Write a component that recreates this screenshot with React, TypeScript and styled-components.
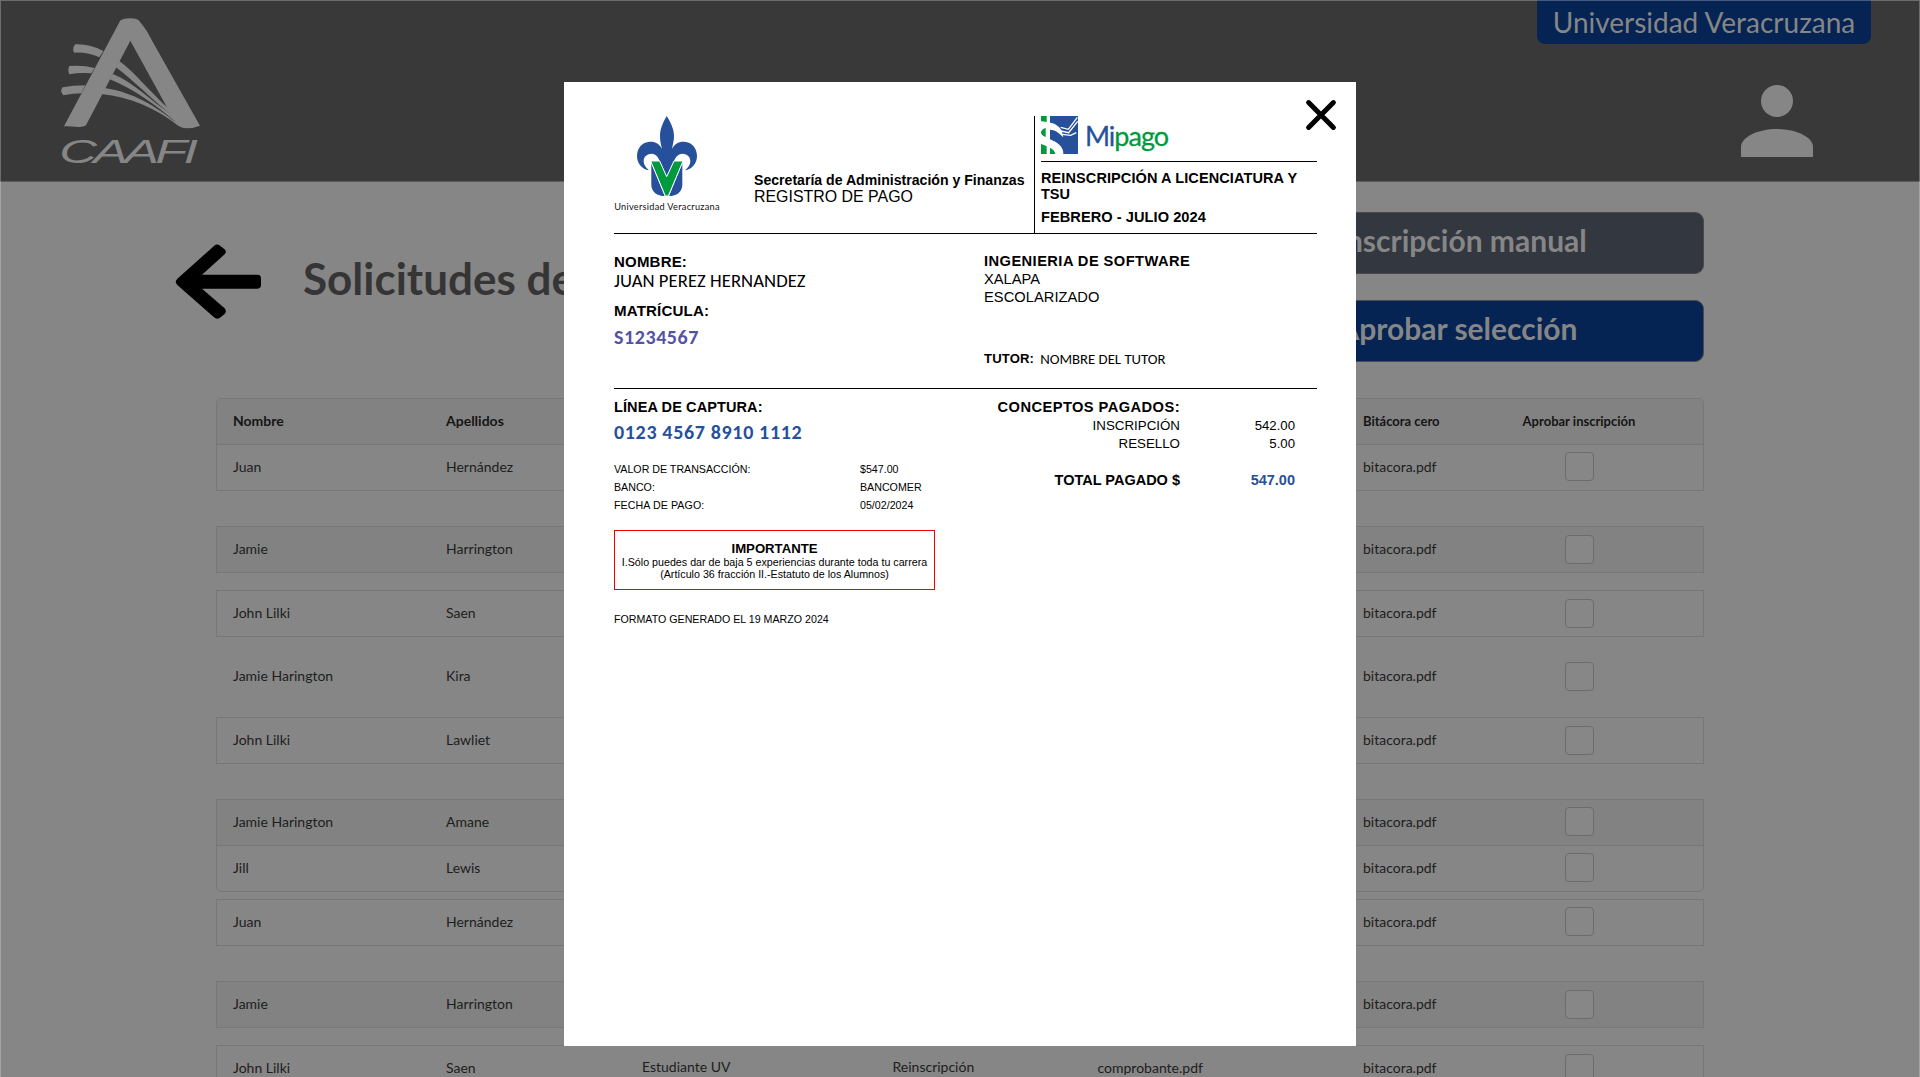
import React from 'react';
import styled, { createGlobalStyle } from 'styled-components';

const GlobalStyle = createGlobalStyle`
  *, *::before, *::after { box-sizing: border-box; }
  html, body { margin: 0; padding: 0; }
  body { font-family: "Lato", sans-serif; background: #868686; overflow: hidden; }
`;

const Screen = styled.div`
  position: relative;
  width: 1920px;
  height: 1077px;
  overflow: hidden;
  background: #868686;
  color: #1d1d1d;
`;

/* ---------- Page header ---------- */

const Header = styled.header`
  display: flex;
  justify-content: space-between;
  height: 182px;
  padding: 0 49px 0 60px;
  background: #393939;
  border-bottom: 1px solid #5c5c5c;
`;

const HeaderLogo = styled.div`
  padding-top: 17px;
`;

const HeaderSide = styled.div`
  display: flex;
  flex-direction: column;
  align-items: flex-end;
`;

const UniversityTag = styled.div`
  width: 334px;
  height: 44px;
  border-radius: 0 0 8px 8px;
  background: #052453;
  color: #868686;
  font-size: 28px;
  line-height: 44px;
  text-align: center;
`;

const UserButton = styled.button`
  display: block;
  margin: 41px 58px 0 0;
  padding: 0;
  border: 0;
  background: none;
  line-height: 0;
`;

/* ---------- Toolbar ---------- */

const Toolbar = styled.section`
  display: flex;
  height: 216px;
  padding: 30px 216px 0 175px;
`;

const BackButton = styled.button`
  width: 87px;
  height: 76px;
  margin-top: 32px;
  padding: 0;
  border: 0;
  background: none;
  line-height: 0;
`;

const Title = styled.h1`
  margin: 39px 0 0 41px;
  color: #353535;
  font-size: 44px;
  font-weight: 700;
  line-height: 54px;
  white-space: nowrap;
`;

const Actions = styled.div`
  display: flex;
  flex-direction: column;
  gap: 26px;
  width: 492px;
  margin-left: auto;
`;

const ActionButton = styled.button<{ $color: string; $shift?: number }>`
  height: 62px;
  padding: 0 0 6px ${(p) => p.$shift ?? 0}px;
  border: 1px solid #4a4a4a;
  border-radius: 9px;
  background: ${(p) => p.$color};
  color: #868686;
  font: 700 30px "Lato", sans-serif;
`;

/* ---------- Table ---------- */

const Table = styled.section`
  width: 1488px;
  margin: 0 auto;
`;

const RowGroup = styled.div<{ $gap: number; $bare?: boolean; $round?: 'top' | 'bottom' }>`
  margin-top: ${(p) => p.$gap}px;
  border: 1px solid ${(p) => (p.$bare ? 'transparent' : '#777777')};
  border-radius: ${(p) => (p.$round === 'top' ? '5px 5px 0 0' : p.$round === 'bottom' ? '0 0 5px 5px' : '0')};
  overflow: hidden;
`;

const Row = styled.div<{ $shaded?: boolean; $head?: boolean }>`
  display: grid;
  grid-template-columns: 213px 196px 250.5px 205px 265.5px 91px 250px;
  align-items: center;
  height: 45px;
  padding-left: 16px;
  background: ${(p) => (p.$shaded ? '#828282' : 'transparent')};
  color: ${(p) => (p.$head ? '#151515' : '#1d1d1d')};
  font-size: 14px;
  font-weight: ${(p) => (p.$head ? 700 : 400)};

  & + & {
    border-top: 1px solid #777777;
    height: 46px;
  }
`;

const Cell = styled.span<{ $lift?: number; $small?: boolean }>`
  padding-bottom: ${(p) => p.$lift ?? 2}px;
  font-size: ${(p) => (p.$small ? 13 : 14)}px;
  white-space: nowrap;
`;

const CheckCell = styled.span<{ $low?: boolean }>`
  display: flex;
  justify-content: center;
  font-size: 13px;
  padding-bottom: ${(p) => (p.$low ? 0 : 2)}px;
`;

const Checkbox = styled.span`
  width: 29px;
  height: 29px;
  border: 1px solid #6c6c6c;
  border-radius: 4px;
  background: #878787;
`;

/* ---------- Modal ---------- */

const Overlay = styled.div`
  position: absolute;
  inset: 0;
  border: 1px solid rgba(255, 255, 255, 0.26);
  border-bottom: 0;
  display: flex;
  justify-content: center;
  align-items: flex-start;
  padding-top: 81px;
`;

const Modal = styled.div`
  position: relative;
  width: 792px;
  height: 964px;
  padding: 34px 39px 0 50px;
  background: #ffffff;
  color: #000000;
  font-family: "Liberation Sans", Arial, sans-serif;
`;

const CloseButton = styled.button`
  position: absolute;
  top: 17px;
  right: 19px;
  padding: 0;
  border: 0;
  background: none;
  line-height: 0;
`;

const DocHeader = styled.div`
  display: flex;
  height: 118px;
  border-bottom: 1px solid #000000;
`;

const Crest = styled.div`
  display: flex;
  flex-direction: column;
  align-items: center;
  width: 106px;
`;

const CrestName = styled.div`
  margin-top: 2px;
  color: #111111;
  font: 400 9.2px/14px "Lato", sans-serif;
  letter-spacing: 0.28px;
  white-space: nowrap;
`;

const Department = styled.div`
  flex: 1;
  padding: 56px 0 0 34px;
`;

const Concept = styled.div`
  width: 283px;
  padding-left: 6px;
  border-left: 1px solid #000000;
`;

const PayBrand = styled.div`
  display: flex;
  height: 46px;
  margin-bottom: 8px;
  border-bottom: 1px solid #000000;
`;

const PayName = styled.span`
  margin: 3px 0 0 6px;
  color: #009a3e;
  font: 400 27px/34px "Lato", sans-serif;
  letter-spacing: -1px;
  -webkit-text-stroke: 0.3px currentColor;

  b {
    color: #27509b;
    font-weight: 400;
  }
`;

const Line = styled.div<{
  $size: number;
  $height: number;
  $top?: number;
  $bold?: boolean;
  $color?: string;
  $spacing?: number;
  $human?: boolean;
  $right?: boolean;
}>`
  margin-top: ${(p) => p.$top ?? 0}px;
  color: ${(p) => p.$color ?? '#000000'};
  font-family: ${(p) => (p.$human ? '"Carlito", "Lato", sans-serif' : '"Liberation Sans", Arial, sans-serif')};
  font-size: ${(p) => p.$size}px;
  font-weight: ${(p) => (p.$bold ? 700 : 400)};
  line-height: ${(p) => p.$height}px;
  letter-spacing: ${(p) => p.$spacing ?? 0}px;
  text-align: ${(p) => (p.$right ? 'right' : 'left')};
  white-space: nowrap;
`;

const StudentSection = styled.div`
  display: grid;
  grid-template-columns: 370px 1fr;
  height: 155px;
  border-bottom: 1px solid #000000;
`;

const StudentColumn = styled.div`
  padding-top: 18px;
`;

const TutorLine = styled.div`
  display: flex;
  gap: 6px;
  margin-top: 44px;
`;

const PaymentSection = styled.div`
  display: grid;
  grid-template-columns: 321px 1fr;
  padding-top: 8px;
`;

const TransactionGrid = styled.div`
  display: grid;
  grid-template-columns: 246px 1fr;
  margin-top: 17px;
`;

const TotalsGrid = styled.div`
  display: grid;
  grid-template-columns: 245px 115px;
  align-content: start;
`;

const Notice = styled.div`
  height: 60px;
  margin-top: 16px;
  padding-top: 10px;
  border: 1px solid #f00000;
  display: flex;
  flex-direction: column;
  align-items: center;
`;

/* ---------- Drawings ---------- */

const CaafiLogo = () => (
  <svg width="142" height="160" viewBox="180 50 426 480" fill="#868686">
    <path d="M192 378 L360 62 Q366 54 390 54 Q410 54 416 60 C434 80 447 102 460 128 L600 376 Q580 384 560 384 Q540 383 528 370 L391 121 L258 375 Q250 381 235 380 Q210 377 192 378Z" />
    <path d="M222 157 Q215 144 226 132 Q270 130 310 152 L298 171 Q265 155 222 157Z" />
    <path d="M208 222 Q202 210 208 197 Q250 194 284 203 L274 219 Q240 216 208 222Z" />
    <path d="M190 285 Q178 273 188 261 Q220 255 256 255 L244 279 Q220 279 190 285Z" />
    <path d="M358 182 C400 212 450 275 508 327 L514 344 C460 300 400 240 347 200Z" />
    <path d="M339 221 C400 245 450 300 518 345 L528 366 C470 315 400 265 328 236Z" />
    <path d="M314 263 C400 275 470 320 527 366 L536 377 C470 325 390 290 304 281Z" />
    <g transform="translate(178 488) scale(1.6 1)">
      <text fontFamily="Liberation Sans, Arial, sans-serif" fontStyle="italic" fontSize="98" textLength="260" lengthAdjust="spacing">
        CAAFI
      </text>
    </g>
  </svg>
);

const UserIcon = () => (
  <svg width="72" height="72" viewBox="0 0 72 72" fill="#868686">
    <circle cx="36" cy="16" r="16" />
    <path d="M0 72V62C0 52 17 44 36 44S72 52 72 62V72Z" />
  </svg>
);

const BackArrow = () => (
  <svg width="87" height="76" viewBox="105 133 261 228">
    <path
      d="M107 246 Q108 241 112 237 L222 139 Q231 131 240 138 L254 149 Q261 156 254 164 L186 225 H353 Q363 226 363 236 V256 Q363 266 353 267 H186 L254 326 Q261 335 254 343 L240 354 Q231 361 222 353 L112 256 Q108 252 107 246Z"
      fill="#000000"
    />
  </svg>
);

const CloseIcon = () => (
  <svg width="32" height="32" viewBox="0 0 32 32">
    <path d="M3.6 3.6 28.4 28.4M28.4 3.6 3.6 28.4" stroke="#000000" strokeWidth="5" strokeLinecap="round" />
  </svg>
);

const FleurDeLis = () => (
  <svg width="62" height="82" viewBox="228 108 186 246">
    <g fill="#27509b">
      <path d="M320 108 C331 126 342 146 342 168 C342 184 338 196 336 206 C344 191 357 184 372 185 C397 186 411 206 411 228 C411 250 396 268 375 271 C386 262 391 253 391 243 C391 230 380 221 367 221 C356 221 347 230 342 243 L320 290 L299 243 C294 230 286 221 275 221 C262 221 251 230 251 243 C251 253 256 262 267 271 C246 268 231 250 231 228 C231 206 245 186 270 185 C285 184 298 191 306 206 C303 196 300 184 300 168 C300 146 310 126 320 108Z" />
      <path d="M274 250 L314 348 C292 348 274 336 274 314Z" />
      <path d="M367 250 L327 348 C349 348 367 336 367 314Z" />
    </g>
    <path d="M272 243 H299 L320 290 L342 243 H369 L325 348 H316Z" fill="#009a3e" stroke="#ffffff" strokeWidth="3" />
  </svg>
);

const MipagoMark = () => (
  <svg width="38" height="38" viewBox="123 108 114 114">
    <g fill="#009a3e">
      <path d="M123 108H140V126Q131 124 123 124Z" />
      <path d="M137 144V171Q123 166 123 157Q124 148 137 144Z" />
      <path d="M123 192Q132 194 140 199V222H123Z" />
      <path d="M150 203Q163 209 166 222H150Z" />
    </g>
    <path d="M150 108H234V222H190C191 200 172 187 150 178Z" fill="#27509b" />
    <path d="M149 128C166 130 176 138 184 150L190 172C176 158 166 149 149 149Z" fill="#ffffff" />
    <path d="M182 142L205 148L232 112M182 153L206 158L233 124M186 163L212 166L229 158" fill="none" stroke="#ffffff" strokeWidth="4" />
  </svg>
);

/* ---------- Data ---------- */

interface Request {
  name: string;
  surname: string;
  userType?: string;
  request?: string;
  receipt?: string;
  shaded?: boolean;
  lowCheck?: boolean;
}

interface Group {
  gap: number;
  bare?: boolean;
  round?: 'top' | 'bottom';
  head?: boolean;
  rows: Request[];
}

const groups: Group[] = [
  { gap: 0, round: 'top', head: true, rows: [{ name: 'Juan', surname: 'Hernández' }] },
  { gap: 35, rows: [{ name: 'Jamie', surname: 'Harrington', shaded: true, lowCheck: true }] },
  { gap: 17, rows: [{ name: 'John Lilki', surname: 'Saen', lowCheck: true }] },
  { gap: 16, bare: true, rows: [{ name: 'Jamie Harington', surname: 'Kira', lowCheck: true }] },
  { gap: 17, rows: [{ name: 'John Lilki', surname: 'Lawliet', lowCheck: true }] },
  {
    gap: 35,
    round: 'bottom',
    rows: [
      { name: 'Jamie Harington', surname: 'Amane', shaded: true },
      { name: 'Jill', surname: 'Lewis' },
    ],
  },
  { gap: 7, rows: [{ name: 'Juan', surname: 'Hernández' }] },
  { gap: 35, rows: [{ name: 'Jamie', surname: 'Harrington', shaded: true, lowCheck: true }] },
  {
    gap: 17,
    rows: [
      {
        name: 'John Lilki',
        surname: 'Saen',
        userType: 'Estudiante UV',
        request: 'Reinscripción',
        receipt: 'comprobante.pdf',
        lowCheck: true,
      },
    ],
  },
];

const RequestRow = ({ row }: { row: Request }) => (
  <Row $shaded={row.shaded}>
    <Cell>{row.name}</Cell>
    <Cell>{row.surname}</Cell>
    <Cell $lift={5}>{row.userType}</Cell>
    <Cell $lift={5}>{row.request}</Cell>
    <Cell>{row.receipt}</Cell>
    <Cell>bitacora.pdf</Cell>
    <CheckCell $low={row.lowCheck}>
      <Checkbox />
    </CheckCell>
  </Row>
);

const Receipt = () => (
  <>
    <DocHeader>
      <Crest>
        <FleurDeLis />
        <CrestName>Universidad Veracruzana</CrestName>
      </Crest>
      <Department>
        <Line $size={14.1} $height={16} $bold>Secretaría de Administración y Finanzas</Line>
        <Line $size={15.93} $height={17}>REGISTRO DE PAGO</Line>
      </Department>
      <Concept>
        <PayBrand>
          <MipagoMark />
          <PayName><b>Mi</b>pago</PayName>
        </PayBrand>
        <Line $size={14.5} $spacing={0.1} $height={16} $bold>REINSCRIPCIÓN A LICENCIATURA Y</Line>
        <Line $size={14.5} $height={16} $bold>TSU</Line>
        <Line $size={14.6} $spacing={0.05} $height={20} $top={5} $bold>FEBRERO - JULIO 2024</Line>
      </Concept>
    </DocHeader>

    <StudentSection>
      <StudentColumn>
        <Line $size={15} $spacing={0.2} $height={19} $bold>NOMBRE:</Line>
        <Line $size={18.67} $spacing={0.06} $height={20} $human>JUAN PEREZ HERNANDEZ</Line>
        <Line $size={15.1} $spacing={0.15} $height={20} $top={10} $bold>MATRÍCULA:</Line>
        <Line $size={20} $spacing={0.57} $height={22} $top={5} $bold $human $color="#5452a3">S1234567</Line>
      </StudentColumn>
      <StudentColumn>
        <Line $size={14.67} $spacing={0.44} $height={18} $bold>INGENIERIA DE SOFTWARE</Line>
        <Line $size={14.67} $height={18}>XALAPA</Line>
        <Line $size={14.67} $spacing={0.05} $height={18}>ESCOLARIZADO</Line>
        <TutorLine>
          <Line $size={13.1} $spacing={0.15} $height={18} $bold>TUTOR:</Line>
          <Line $size={14.75} $height={18} $human>NOMBRE DEL TUTOR</Line>
        </TutorLine>
      </StudentColumn>
    </StudentSection>

    <PaymentSection>
      <div>
        <Line $size={14.5} $spacing={0.1} $height={20} $bold>LÍNEA DE CAPTURA:</Line>
        <Line $size={20} $spacing={0.66} $height={22} $top={4} $bold $human $color="#27509b">0123 4567 8910 1112</Line>
        <TransactionGrid>
          <Line $size={10.67} $height={18}>VALOR DE TRANSACCIÓN:</Line>
          <Line $size={10.67} $height={18}>$547.00</Line>
          <Line $size={10.67} $height={18}>BANCO:</Line>
          <Line $size={10.67} $height={18}>BANCOMER</Line>
          <Line $size={10.67} $spacing={0.08} $height={18}>FECHA DE PAGO:</Line>
          <Line $size={10.67} $height={18}>05/02/2024</Line>
        </TransactionGrid>
        <Notice>
          <Line $size={13.16} $height={15} $bold>IMPORTANTE</Line>
          <Line $size={10.7} $height={12}>I.Sólo puedes dar de baja 5 experiencias durante toda tu carrera</Line>
          <Line $size={10.7} $height={12}>(Artículo 36 fracción II.-Estatuto de los Alumnos)</Line>
        </Notice>
        <Line $size={10.67} $height={18} $top={20}>FORMATO GENERADO EL 19 MARZO 2024</Line>
      </div>
      <TotalsGrid>
        <Line $size={14.67} $spacing={0.44} $height={20} $bold $right>CONCEPTOS PAGADOS:</Line>
        <span />
        <Line $size={13.33} $height={18} $right>INSCRIPCIÓN</Line>
        <Line $size={13.2} $height={18} $right>542.00</Line>
        <Line $size={13.33} $height={18} $right>RESELLO</Line>
        <Line $size={13.2} $height={18} $right>5.00</Line>
        <Line $size={14.5} $height={20} $top={17} $bold $right>TOTAL PAGADO $</Line>
        <Line $size={14.5} $height={20} $top={17} $bold $right $color="#27509b">547.00</Line>
      </TotalsGrid>
    </PaymentSection>
  </>
);

export default function App() {
  return (
    <Screen>
      <GlobalStyle />
      <Header>
        <HeaderLogo>
          <CaafiLogo />
        </HeaderLogo>
        <HeaderSide>
          <UniversityTag>Universidad Veracruzana</UniversityTag>
          <UserButton>
            <UserIcon />
          </UserButton>
        </HeaderSide>
      </Header>

      <Toolbar>
        <BackButton>
          <BackArrow />
        </BackButton>
        <Title>Solicitudes de</Title>
        <Actions>
          <ActionButton $color="#333740" $shift={8}>Inscripción manual</ActionButton>
          <ActionButton $color="#052453">Aprobar selección</ActionButton>
        </Actions>
      </Toolbar>

      <Table>
        {groups.map((group, g) => (
          <RowGroup key={g} $gap={group.gap} $bare={group.bare} $round={group.round}>
            {group.head && (
              <Row $head $shaded>
                <Cell>Nombre</Cell>
                <Cell>Apellidos</Cell>
                <Cell />
                <Cell />
                <Cell />
                <Cell $small $lift={1}>Bitácora cero</Cell>
                <CheckCell>Aprobar inscripción</CheckCell>
              </Row>
            )}
            {group.rows.map((row, r) => (
              <RequestRow key={r} row={row} />
            ))}
          </RowGroup>
        ))}
      </Table>

      <Overlay>
        <Modal>
          <CloseButton>
            <CloseIcon />
          </CloseButton>
          <Receipt />
        </Modal>
      </Overlay>
    </Screen>
  );
}
